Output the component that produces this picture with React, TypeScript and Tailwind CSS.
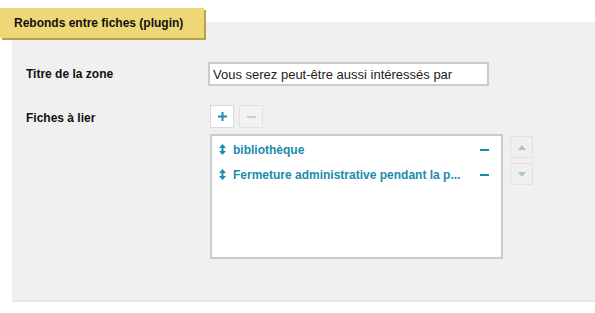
import React from "react";

interface Fiche {
  id: number;
  titre: string;
}

const fiches: Fiche[] = [
  { id: 1, titre: "bibliothèque" },
  { id: 2, titre: "Fermeture administrative pendant la p..." },
];

function DragIcon() {
  return (
    <svg width="7" height="11" viewBox="0 0 7 11" className="shrink-0">
      <path d="M3.5 0 L7 4 H0 Z" fill="#1a8cb0" />
      <path d="M3.5 11 L7 7 H0 Z" fill="#1a8cb0" />
      <rect x="2.5" y="3" width="2" height="5" fill="#1a8cb0" />
    </svg>
  );
}

export default function App() {
  return (
    <div
      className="relative w-full h-[313px] bg-white overflow-hidden"
      style={{ fontFamily: '"Liberation Sans", Arial, sans-serif' }}
    >
      <div className="ml-[12px] mt-[22px] h-[280px] bg-[#f0f0f0] border-b-2 border-[#e6e6e6] pt-[40px]">
        <div className="flex items-center">
          <label className="w-[196px] pl-[14px] text-[12px] font-bold text-[#111]">
            Titre de la zone
          </label>
          <input
            className="w-[281px] h-[24px] border-2 border-[#cbcbcb] bg-white px-[3px] text-[13px] text-[#222] outline-none"
            defaultValue="Vous serez peut-être aussi intéressés par"
          />
        </div>

        <div className="flex mt-[19px]">
          <label className="w-[198px] pl-[14px] pt-[4px] text-[12px] font-bold text-[#111]">
            Fiches à lier
          </label>
          <div>
            <div className="flex gap-[5px]">
              <button className="w-[24px] h-[23px] bg-white border border-[#d9d9d9] flex items-center justify-center">
                <svg width="9" height="9" viewBox="0 0 9 9">
                  <rect x="0" y="3.5" width="9" height="2" fill="#1a8cb0" />
                  <rect x="3.5" y="0" width="2" height="9" fill="#1a8cb0" />
                </svg>
              </button>
              <button className="w-[24px] h-[23px] bg-[#f2f2f2] border border-[#e2e2e2] flex items-center justify-center">
                <svg width="9" height="2" viewBox="0 0 9 2">
                  <rect x="0" y="0" width="9" height="2" fill="#bcd6de" />
                </svg>
              </button>
            </div>
            <div className="flex gap-[7px] mt-[6px]">
              <ul className="w-[293px] h-[125px] bg-white border-2 border-[#cbcbcb] pt-[1px]">
                {fiches.map((f) => (
                  <li key={f.id} className="flex items-center h-[25px] pl-[7px] pr-[12px]">
                    <DragIcon />
                    <span className="ml-[7px] flex-1 text-[12px] font-bold text-[#1a8cb0]">
                      {f.titre}
                    </span>
                    <span className="w-[9px] h-[2px] bg-[#1a8cb0]" />
                  </li>
                ))}
              </ul>
              <div className="flex flex-col gap-[5px] pt-[2px]">
                <button className="w-[23px] h-[22px] bg-[#efefef] border border-[#e2e2e2] flex items-center justify-center">
                  <svg width="8" height="5" viewBox="0 0 8 5">
                    <path d="M4 0 L8 5 H0 Z" fill="#a9c7d1" />
                  </svg>
                </button>
                <button className="w-[23px] h-[22px] bg-[#efefef] border border-[#e2e2e2] flex items-center justify-center">
                  <svg width="8" height="5" viewBox="0 0 8 5">
                    <path d="M4 5 L8 0 H0 Z" fill="#a9c7d1" />
                  </svg>
                </button>
              </div>
            </div>
          </div>
        </div>
      </div>

      <div className="absolute left-0 top-[8px] w-[204px] h-[30px] bg-[#efd777] shadow-[2px_2px_0_#b8a14c] flex items-center pl-[14px] text-[12px] font-bold text-[#111]">
        Rebonds entre fiches (plugin)
      </div>
    </div>
  );
}
